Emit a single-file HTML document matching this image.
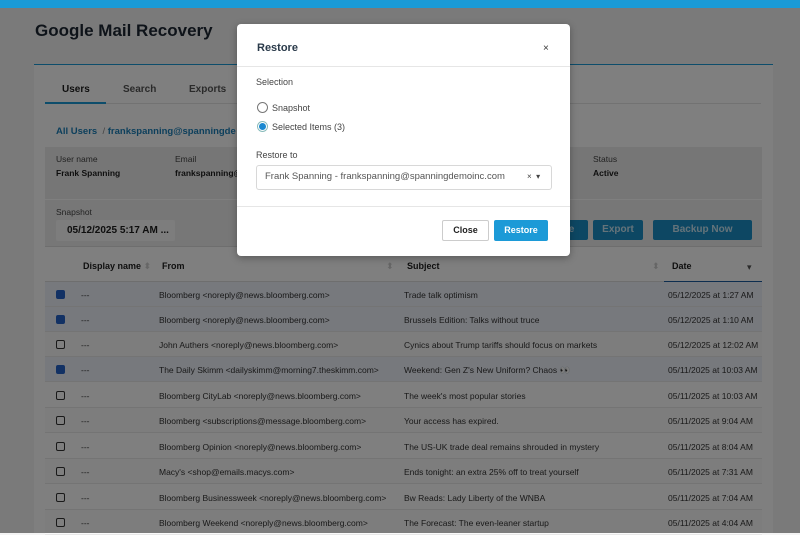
<!DOCTYPE html>
<html><head><style>
*{margin:0;padding:0;box-sizing:border-box}
body{width:800px;height:533px;overflow:hidden;background:#f4f4f4;font-family:"Liberation Sans","DejaVu Sans",sans-serif;position:relative;color:#1d1d1d}
.a{position:absolute;white-space:nowrap}
.top{left:0;top:0;width:800px;height:8px;background:#1a9ad6}
.panel{left:34px;top:64px;width:739px;height:469px;background:#fff;border-top:1px solid #1a9ad6}
.row{position:absolute;left:45px;width:717px;height:25px;font-size:8.5px;color:#333;border-bottom:1px solid #e8e8e8;background:#fff}
.row.alt{background:#fafafa}
.row span{position:absolute;top:8px;white-space:nowrap}
.cb{position:absolute;left:11px;top:8px;width:9px;height:9px;border:1.3px solid #333;border-radius:2px;background:#fff}
.cb.on{background:#2563c9;border-color:#2563c9}
.sel{background:#eef2fb!important}
.btn{position:absolute;top:220px;height:20px;background:#1a8fc6;color:#c9e6f4;font-size:10px;font-weight:bold;text-align:center;line-height:20px;border-radius:2px}
.ov{left:0;top:8px;width:800px;height:525px;background:rgba(0,0,0,0.5)}
.modal{left:237px;top:24px;width:333px;height:232px;background:#fff;border-radius:4px;box-shadow:0 2px 8px rgba(0,0,0,.3)}
.m{position:absolute;white-space:nowrap;font-size:9px;color:#444}
</style></head><body>
<div class="a top"></div>
<div class="a" style="left:35px;top:21px;font-size:17px;font-weight:bold;color:#1c2633">Google Mail Recovery</div>
<div class="a panel"></div>
<div class="a" style="left:62px;top:84px;font-size:10px;font-weight:bold;color:#1d1d1d">Users</div>
<div class="a" style="left:123px;top:84px;font-size:10px;font-weight:bold;color:#555">Search</div>
<div class="a" style="left:189px;top:84px;font-size:10px;font-weight:bold;color:#555">Exports</div>
<div class="a" style="left:45px;top:103px;width:716px;height:1px;background:#e4e4e4"></div>
<div class="a" style="left:45px;top:102px;width:61px;height:2px;background:#1a9ad6"></div>
<div class="a" style="left:56px;top:126px;font-size:9.5px;font-weight:bold;color:#1a7fb8">All Users <span style="color:#888;font-weight:normal">&nbsp;/</span> frankspanning@spanningde</div>
<div class="a" style="left:45px;top:147px;width:717px;height:52px;background:#ececec"></div>
<div class="a" style="left:45px;top:200px;width:717px;height:47px;background:#efefef;border-bottom:1px solid #ddd"></div>
<div class="a" style="left:56px;top:154px;font-size:8.5px;color:#444">User name</div>
<div class="a" style="left:56px;top:168px;font-size:8.5px;font-weight:bold;color:#1d1d1d">Frank Spanning</div>
<div class="a" style="left:175px;top:154px;font-size:8.5px;color:#444">Email</div>
<div class="a" style="left:175px;top:168px;font-size:8.5px;font-weight:bold;color:#1d1d1d">frankspanning@</div>
<div class="a" style="left:593px;top:154px;font-size:8.5px;color:#444">Status</div>
<div class="a" style="left:593px;top:168px;font-size:8.5px;font-weight:bold;color:#1d1d1d">Active</div>
<div class="a" style="left:56px;top:207px;font-size:8.5px;color:#444">Snapshot</div>
<div class="a" style="left:56px;top:220px;width:119px;height:21px;background:#fafafa;border-radius:2px;font-size:10px;font-weight:bold;line-height:21px;padding-left:11px;color:#1d1d1d">05/12/2025 5:17 AM ...</div>
<div class="btn" style="left:540px;width:48px">&nbsp;&nbsp;&nbsp;&nbsp;re</div>
<div class="btn" style="left:593px;width:50px">Export</div>
<div class="btn" style="left:653px;width:99px">Backup Now</div>
<div class="a" style="left:45px;top:252px;width:717px;height:30px;border-bottom:1px solid #ddd"></div>
<div class="a" style="left:83px;top:261px;font-size:9px;font-weight:bold">Display name <span style="color:#ccc">⬍</span></div>
<div class="a" style="left:162px;top:261px;font-size:9px;font-weight:bold">From</div>
<div class="a" style="left:386px;top:261px;font-size:9px;color:#ccc">⬍</div>
<div class="a" style="left:407px;top:261px;font-size:9px;font-weight:bold">Subject</div>
<div class="a" style="left:652px;top:261px;font-size:9px;color:#ccc">⬍</div>
<div class="a" style="left:672px;top:261px;font-size:9px;font-weight:bold">Date</div>
<div class="a" style="left:747px;top:262px;font-size:9px;color:#555">▾</div>
<div class="a" style="left:664px;top:281px;width:98px;height:1px;background:#1a5a9e"></div>

<div class="row sel" style="top:282px"><div class="cb on"></div><span style="left:36px">---</span><span style="left:114px">Bloomberg &lt;noreply@news.bloomberg.com&gt;</span><span style="left:359px">Trade talk optimism</span><span style="left:623px">05/12/2025 at 1:27 AM</span></div>
<div class="row sel" style="top:307px"><div class="cb on"></div><span style="left:36px">---</span><span style="left:114px">Bloomberg &lt;noreply@news.bloomberg.com&gt;</span><span style="left:359px">Brussels Edition: Talks without truce</span><span style="left:623px">05/12/2025 at 1:10 AM</span></div>
<div class="row alt" style="top:332px"><div class="cb"></div><span style="left:36px">---</span><span style="left:114px">John Authers &lt;noreply@news.bloomberg.com&gt;</span><span style="left:359px">Cynics about Trump tariffs should focus on markets</span><span style="left:623px">05/12/2025 at 12:02 AM</span></div>
<div class="row sel" style="top:357px"><div class="cb on"></div><span style="left:36px">---</span><span style="left:114px">The Daily Skimm &lt;dailyskimm@morning7.theskimm.com&gt;</span><span style="left:359px">Weekend: Gen Z's New Uniform? Chaos 👀</span><span style="left:623px">05/11/2025 at 10:03 AM</span></div>
<div class="row" style="top:383px"><div class="cb"></div><span style="left:36px">---</span><span style="left:114px">Bloomberg CityLab &lt;noreply@news.bloomberg.com&gt;</span><span style="left:359px">The week's most popular stories</span><span style="left:623px">05/11/2025 at 10:03 AM</span></div>
<div class="row alt" style="top:408px"><div class="cb"></div><span style="left:36px">---</span><span style="left:114px">Bloomberg &lt;subscriptions@message.bloomberg.com&gt;</span><span style="left:359px">Your access has expired.</span><span style="left:623px">05/11/2025 at 9:04 AM</span></div>
<div class="row" style="top:434px"><div class="cb"></div><span style="left:36px">---</span><span style="left:114px">Bloomberg Opinion &lt;noreply@news.bloomberg.com&gt;</span><span style="left:359px">The US-UK trade deal remains shrouded in mystery</span><span style="left:623px">05/11/2025 at 8:04 AM</span></div>
<div class="row alt" style="top:459px"><div class="cb"></div><span style="left:36px">---</span><span style="left:114px">Macy's &lt;shop@emails.macys.com&gt;</span><span style="left:359px">Ends tonight: an extra 25% off to treat yourself</span><span style="left:623px">05/11/2025 at 7:31 AM</span></div>
<div class="row" style="top:485px"><div class="cb"></div><span style="left:36px">---</span><span style="left:114px">Bloomberg Businessweek &lt;noreply@news.bloomberg.com&gt;</span><span style="left:359px">Bw Reads: Lady Liberty of the WNBA</span><span style="left:623px">05/11/2025 at 7:04 AM</span></div>
<div class="row alt" style="top:510px"><div class="cb"></div><span style="left:36px">---</span><span style="left:114px">Bloomberg Weekend &lt;noreply@news.bloomberg.com&gt;</span><span style="left:359px">The Forecast: The even-leaner startup</span><span style="left:623px">05/11/2025 at 4:04 AM</span></div>

<div class="a ov"></div>

<div class="a modal">
 <div class="m" style="left:20px;top:18px;font-size:11px;font-weight:bold;color:#2a3a4a">Restore</div>
 <div class="m" style="left:306px;top:19px;font-size:10px;color:#333">×</div>
 <div class="m" style="left:0;top:42px;width:333px;height:1px;background:#e6e6e6"></div>
 <div class="m" style="left:19px;top:53px">Selection</div>
 <div class="m" style="left:20px;top:78px;width:11px;height:11px;border:1px solid #777;border-radius:50%"></div>
 <div class="m" style="left:35px;top:79px">Snapshot</div>
 <div class="m" style="left:20px;top:97px;width:11px;height:11px;border:1px solid #8bb;border-radius:50%;background:#fff"><div style="position:absolute;left:1px;top:1px;width:7px;height:7px;border-radius:50%;background:#1a88d0"></div></div>
 <div class="m" style="left:35px;top:98px">Selected Items (3)</div>
 <div class="m" style="left:19px;top:126px">Restore to</div>
 <div class="m" style="left:19px;top:141px;width:296px;height:25px;border:1px solid #d8d8d8;border-radius:3px"></div>
 <div class="m" style="left:28px;top:147px;font-size:9.5px;color:#555">Frank Spanning - frankspanning@spanningdemoinc.com</div>
 <div class="m" style="left:290px;top:148px;font-size:8px;color:#444">× &nbsp;▾</div>
 <div class="m" style="left:0;top:182px;width:333px;height:1px;background:#e6e6e6"></div>
 <div class="m" style="left:205px;top:196px;width:47px;height:21px;border:1px solid #ccc;border-radius:2px;text-align:center;line-height:19px;font-weight:bold;color:#222">Close</div>
 <div class="m" style="left:257px;top:196px;width:54px;height:21px;background:#1c9ad7;border-radius:2px;text-align:center;line-height:21px;font-weight:bold;color:#fff">Restore</div>
</div>
</body></html>
